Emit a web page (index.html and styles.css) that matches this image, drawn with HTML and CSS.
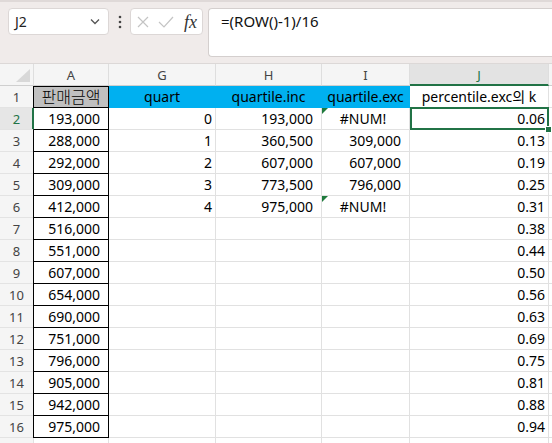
FILE: index.html
```html
<!DOCTYPE html>
<html lang="ko">
<head>
  <meta charset="UTF-8">
  <meta name="viewport" content="width=device-width, initial-scale=1.0">
  <link rel="stylesheet" href="styles.css">
  <title>percentile</title>
</head>
<body>
  <div class="toolbar">
    <div class="namebox">
      <span>J2</span>
      <svg width="10" height="7" viewBox="0 0 10 7"><path d="M1 1.5l4 4 4-4" fill="none" stroke="#555" stroke-width="1.3"/></svg>
    </div>
    <div class="grip">
      <svg width="4" height="14" viewBox="0 0 4 14"><circle cx="2" cy="2" r="1.3" fill="#444"/><circle cx="2" cy="7" r="1.3" fill="#444"/><circle cx="2" cy="12" r="1.3" fill="#444"/></svg>
    </div>
    <div class="fxbox">
      <svg width="12" height="12" viewBox="0 0 12 12"><path d="M1 1l10 10M11 1L1 11" stroke="#c4c4c4" stroke-width="1.2"/></svg>
      <svg width="16" height="12" viewBox="0 0 16 12"><path d="M1 6l5 5L15 1" fill="none" stroke="#c4c4c4" stroke-width="1.2"/></svg>
      <span class="fx">fx</span>
    </div>
    <div class="formula">=(ROW()-1)/16</div>
  </div>

  <div class="sheet">
    <div class="hd corner"><svg width="14" height="13" viewBox="0 0 14 13"><polygon points="14,0 14,13 0,13" fill="#d8d8d8"/></svg></div>
    <div class="hd first">A</div>
    <div class="hd">G</div>
    <div class="hd">H</div>
    <div class="hd">I</div>
    <div class="hd active">J</div>
    <div class="hd"></div>

    <div class="rh">1</div>
    <div class="c a title">판매금액</div>
    <div class="c blue">quart</div>
    <div class="c blue">quartile.inc</div>
    <div class="c blue">quartile.exc</div>
    <div class="c ctr">percentile.exc의 k</div>
    <div class="c"></div>

    <div class="rh active">2</div>
    <div class="c a num sel-row">193,000</div>
    <div class="c int">0</div>
    <div class="c num">193,000</div>
    <div class="c err">#NUM!</div>
    <div class="c int sel">0.06<span class="handle"></span></div>
    <div class="c"></div>

    <div class="rh">3</div>
    <div class="c a num">288,000</div>
    <div class="c int">1</div>
    <div class="c num">360,500</div>
    <div class="c num">309,000</div>
    <div class="c int">0.13</div>
    <div class="c"></div>

    <div class="rh">4</div>
    <div class="c a num">292,000</div>
    <div class="c int">2</div>
    <div class="c num">607,000</div>
    <div class="c num">607,000</div>
    <div class="c int">0.19</div>
    <div class="c"></div>

    <div class="rh">5</div>
    <div class="c a num">309,000</div>
    <div class="c int">3</div>
    <div class="c num">773,500</div>
    <div class="c num">796,000</div>
    <div class="c int">0.25</div>
    <div class="c"></div>

    <div class="rh">6</div>
    <div class="c a num">412,000</div>
    <div class="c int">4</div>
    <div class="c num">975,000</div>
    <div class="c err">#NUM!</div>
    <div class="c int">0.31</div>
    <div class="c"></div>

    <div class="rh">7</div>
    <div class="c a num">516,000</div>
    <div class="c"></div><div class="c"></div><div class="c"></div>
    <div class="c int">0.38</div>
    <div class="c"></div>

    <div class="rh">8</div>
    <div class="c a num">551,000</div>
    <div class="c"></div><div class="c"></div><div class="c"></div>
    <div class="c int">0.44</div>
    <div class="c"></div>

    <div class="rh">9</div>
    <div class="c a num">607,000</div>
    <div class="c"></div><div class="c"></div><div class="c"></div>
    <div class="c int">0.50</div>
    <div class="c"></div>

    <div class="rh">10</div>
    <div class="c a num">654,000</div>
    <div class="c"></div><div class="c"></div><div class="c"></div>
    <div class="c int">0.56</div>
    <div class="c"></div>

    <div class="rh">11</div>
    <div class="c a num">690,000</div>
    <div class="c"></div><div class="c"></div><div class="c"></div>
    <div class="c int">0.63</div>
    <div class="c"></div>

    <div class="rh">12</div>
    <div class="c a num">751,000</div>
    <div class="c"></div><div class="c"></div><div class="c"></div>
    <div class="c int">0.69</div>
    <div class="c"></div>

    <div class="rh">13</div>
    <div class="c a num">796,000</div>
    <div class="c"></div><div class="c"></div><div class="c"></div>
    <div class="c int">0.75</div>
    <div class="c"></div>

    <div class="rh">14</div>
    <div class="c a num">905,000</div>
    <div class="c"></div><div class="c"></div><div class="c"></div>
    <div class="c int">0.81</div>
    <div class="c"></div>

    <div class="rh">15</div>
    <div class="c a num">942,000</div>
    <div class="c"></div><div class="c"></div><div class="c"></div>
    <div class="c int">0.88</div>
    <div class="c"></div>

    <div class="rh">16</div>
    <div class="c a num">975,000</div>
    <div class="c"></div><div class="c"></div><div class="c"></div>
    <div class="c int">0.94</div>
    <div class="c"></div>

    <div class="rh"></div>
    <div class="c plain-a"></div>
    <div class="c"></div><div class="c"></div><div class="c"></div>
    <div class="c"></div>
    <div class="c"></div>
  </div>
</body>
</html>
```

FILE: styles.css
```css
body {
  margin: 0;
  background: #fff;
  font-family: "Noto Sans", "Noto Sans CJK KR", sans-serif;
  overflow: hidden;
}

.toolbar {
  display: flex;
  align-items: flex-start;
  height: 64px;
  box-sizing: border-box;
  padding: 6px 0 0 8px;
  background: #f0ebea;
  border-top: 2px solid #dfd9d8;
  border-bottom: 1px solid #dcd8d7;
}

.namebox {
  width: 101px;
  height: 27px;
  box-sizing: border-box;
  display: flex;
  align-items: center;
  justify-content: space-between;
  padding: 0 8px 0 6px;
  background: #fff;
  border: 1px solid #dcd7d6;
  border-radius: 4px;
  font-size: 14px;
  color: #222;
}

.grip {
  width: 21px;
  height: 27px;
  display: flex;
  align-items: center;
  justify-content: center;
}

.fxbox {
  width: 73px;
  height: 27px;
  box-sizing: border-box;
  display: flex;
  align-items: center;
  gap: 9px;
  padding: 0 0 0 6px;
  margin-right: 5px;
  background: #fff;
  border: 1px solid #dcd7d6;
  border-radius: 4px;
}

.fx {
  font-family: "Liberation Serif", serif;
  font-style: italic;
  font-size: 18px;
  color: #333;
  line-height: 1;
  margin-left: 1px;
}

.formula {
  flex: 1;
  height: 49px;
  box-sizing: border-box;
  padding: 2px 12px;
  background: #fff;
  border: 1px solid #d4cfce;
  border-right: 0;
  border-radius: 4px 0 0 4px;
  font-size: 15px;
  line-height: 20px;
  color: #111;
}

.sheet {
  display: grid;
  grid-template-columns: 33px 76px 107px 106px 88px 139px 1fr;
  grid-auto-rows: 22px;
  font-size: 14px;
  color: #000;
}

.hd {
  box-sizing: border-box;
  background: #f5f5f5;
  border-right: 1px solid #dedede;
  border-bottom: 1px solid #cfcfcf;
  text-align: center;
  font-size: 13px;
  line-height: 22px;
  color: #444;
}

.hd.corner {
  border-right: 0;
  display: flex;
  align-items: flex-end;
  justify-content: flex-end;
  padding: 0 3px 3px 0;
}

.hd.first {
  border-left: 1px solid #dedede;
}

.hd.active {
  background: #e3e3e3;
  color: #217346;
  border-bottom: 2px solid #217346;
}

.rh {
  box-sizing: border-box;
  background: #f5f5f5;
  border-bottom: 1px solid #e3e3e3;
  text-align: center;
  font-size: 13px;
  line-height: 22px;
  color: #444;
}

.rh.active {
  background: #e6e6e6;
  color: #217346;
  box-shadow: inset -1px 0 0 #217346;
}

.c {
  position: relative;
  box-sizing: border-box;
  border-right: 1px solid #e1e1e1;
  border-bottom: 1px solid #e1e1e1;
  line-height: 21px;
  white-space: nowrap;
  padding: 0 3px;
}

.a {
  border-left: 1px solid #000;
  border-right: 1px solid #000;
  border-bottom: 1px solid #000;
}

.plain-a {
  border-left: 1px solid #e1e1e1;
}

.title {
  background: #c0c0c0;
  border-top: 1px solid #000;
  text-align: center;
  font-size: 16px;
  font-weight: 300;
  line-height: 20px;
  padding: 0;
}

.blue {
  background: #00b0f0;
  border-right-color: #00b0f0;
  border-bottom-color: #00b0f0;
  text-align: center;
}

.ctr {
  text-align: center;
}

.num {
  text-align: right;
  padding-right: 8px;
}

.int {
  text-align: right;
}

.sel-row {
  border-left-color: #217346;
}

.err {
  text-align: center;
  padding-right: 8px;
}

.err::before {
  content: '';
  position: absolute;
  top: 0;
  left: 0;
  border-top: 6px solid #1f7a3c;
  border-right: 6px solid transparent;
}

.sel::after {
  content: '';
  position: absolute;
  top: -1px;
  left: 0;
  right: -1px;
  bottom: -1px;
  border: 2px solid #217346;
}

.handle {
  position: absolute;
  right: -4px;
  bottom: -4px;
  width: 5px;
  height: 5px;
  background: #217346;
  border: 1px solid #fff;
  z-index: 2;
}
```
